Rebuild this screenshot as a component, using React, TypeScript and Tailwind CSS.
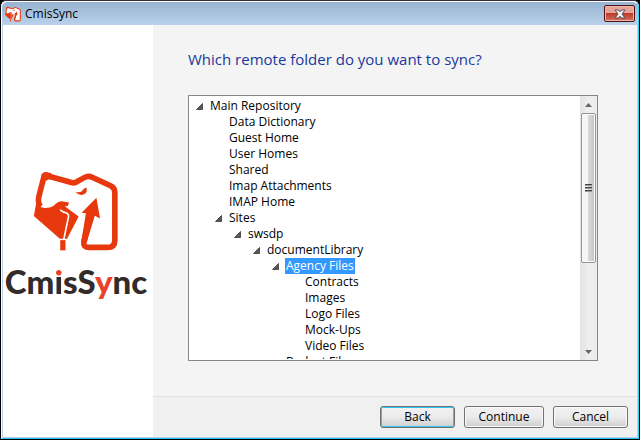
import { useState } from 'react';
import clsx from 'clsx';

type Folder = { name: string; children?: Folder[] };

const repository: Folder = {
  name: 'Main Repository',
  children: [
    { name: 'Data Dictionary' },
    { name: 'Guest Home' },
    { name: 'User Homes' },
    { name: 'Shared' },
    { name: 'Imap Attachments' },
    { name: 'IMAP Home' },
    {
      name: 'Sites',
      children: [
        {
          name: 'swsdp',
          children: [
            {
              name: 'documentLibrary',
              children: [
                {
                  name: 'Agency Files',
                  children: [
                    { name: 'Contracts' },
                    { name: 'Images' },
                    { name: 'Logo Files' },
                    { name: 'Mock-Ups' },
                    { name: 'Video Files' },
                  ],
                },
                { name: 'Budget Files' },
              ],
            },
          ],
        },
      ],
    },
  ],
};

function Elephant({ className }: { className: string }) {
  return (
    <svg viewBox="98 30 258 243" className={className} aria-hidden="true">
      <path
        d="M131 42 L114 108 Q110 128 120 138 L204 136 L235 168 L244 158 L250 243 Q246 262 265 262 H323 Q345 262 345 240 V95 Q345 81 332 75 L276 49 Q264 43 252 50 L232 61 Q223 68 213 65 Z"
        fill="#fff"
      />
      <path
        d="M131 42 L114 108 Q110 128 120 138 M131 42 L213 65 Q223 68 232 61 L252 50 Q264 43 276 49 L332 75 Q345 81 345 95 V240 Q345 262 323 262 H265 Q248 262 251 245 L262 200"
        fill="none"
        stroke="#e8380d"
        strokeWidth="17"
        strokeLinejoin="round"
      />
      <path d="M121 46 Q124 32 137 33 L152 37 L148 54 L122 66 Z" fill="#e8380d" />
      <path d="M289 111 L300 174 L284 166 L260 246 L243 244 L257 158 L244 157 Z" fill="#e8380d" />
      <path d="M225 94 Q240 97 246 90 Q249 82 259 80 Q262 94 253 100 Q238 108 225 94 Z" fill="#e8380d" />
      <path
        d="M106 128 Q118 144 140 142 Q155 141 164 131 Q172 122 183 122 L206 126 L202 136 L193 137 L235 168 L200 236 H178 L99 167 Z"
        fill="#e8380d"
      />
      <path d="M179 148 Q187 155 196 157 Q206 160 204 170 L190 237" fill="none" stroke="#fff" strokeWidth="5" />
      <path d="M179 240 H195 V271 H179 Z" fill="#e8380d" />
    </svg>
  );
}

function TreeItem({ folder, selected, onSelect }: { folder: Folder; selected: string; onSelect: (name: string) => void }) {
  const [open, setOpen] = useState(true);
  const active = selected === folder.name;

  return (
    <li role="treeitem" aria-selected={active} aria-expanded={folder.children ? open : undefined}>
      <div className="flex h-4 items-center">
        {folder.children ? (
          <button aria-label={`Toggle ${folder.name}`} onClick={() => setOpen(!open)} className="flex w-5 justify-center">
            <svg viewBox="0 0 7 7" className="size-[7px]">
              <path d="M6.5 0.5 V6.5 H0.5 Z" fill="#595959" stroke="#262626" strokeWidth="0.7" />
            </svg>
          </button>
        ) : (
          <span className="w-5" />
        )}
        <button
          onClick={() => onSelect(folder.name)}
          className={clsx('h-4 whitespace-nowrap px-px leading-4', active ? 'bg-[#3399ff] text-white' : 'text-black')}
        >
          {folder.name}
        </button>
      </div>
      {folder.children && open && (
        <ul role="group" className="pl-[19px]">
          {folder.children.map(c => (
            <TreeItem key={c.name} folder={c} selected={selected} onSelect={onSelect} />
          ))}
        </ul>
      )}
    </li>
  );
}

function ScrollBar() {
  return (
    <div className="flex w-[17px] shrink-0 flex-col bg-linear-to-r from-[#e3e3e3] via-[#eeeeee] to-[#ececec]" aria-hidden="true">
      <div className="flex h-[17px] items-center justify-center">
        <svg viewBox="0 0 7 4" className="h-1 w-[7px]">
          <path d="M3.5 0 L7 4 H0 Z" fill="#666" />
        </svg>
      </div>
      <div className="mx-px flex h-[57%] flex-col items-center justify-center gap-px rounded-xs border border-[#959595] bg-linear-to-r from-[#f5f5f5] from-45% via-[#d8d8d8] via-50% to-[#c4c4c8] shadow-[inset_0_0_0_1px_#fafafa]">
        {[0, 1, 2].map(i => (
          <span key={i} className="h-0.5 w-[7px] border-t border-[#444] bg-[#999]" />
        ))}
      </div>
      <div className="mt-auto flex h-[17px] items-center justify-center">
        <svg viewBox="0 0 7 4" className="h-1 w-[7px]">
          <path d="M0 0 H7 L3.5 4 Z" fill="#666" />
        </svg>
      </div>
    </div>
  );
}

const button =
  'h-[22px] rounded-[3px] border border-[#707070] bg-linear-to-b from-[#f2f2f2] from-0% via-[#ebebeb] via-50% to-[#cfcfcf] text-black';

export default function App() {
  const [selected, setSelected] = useState('Agency Files');

  return (
    <div className="h-screen bg-black font-['Open_Sans',sans-serif] text-[12px]">
      <div className="flex h-full flex-col rounded-t-md border border-black border-t-[#33303a] bg-[#b9d1ea]">
        <div className="flex min-h-0 flex-1 flex-col rounded-t-md border border-t-white border-r-[#35d3f5] border-b-[#1fc3e8] border-l-white">
          <header className="flex h-[23px] shrink-0 items-center gap-1 rounded-t-md bg-linear-to-b from-[#98b4d2] to-[#b9d1ea] px-[3px]">
            <Elephant className="size-4" />
            <h1 className="flex-1 text-black">CmisSync</h1>
            <button
              aria-label="Close"
              className="flex h-[17px] w-[31px] items-center justify-center rounded-xs border border-[#4b1119] bg-linear-to-b from-[#e5a497] from-45% via-[#bf3a26] via-50% to-[#d2705a] shadow-[inset_0_0_0_1px_#eeb5a8]"
            >
              <svg viewBox="0 0 12 10" className="h-[10px] w-3">
                <path
                  d="M1 1 H4.4 L6 2.8 L7.6 1 H11 L8 5 L11 9 H7.6 L6 7.2 L4.4 9 H1 L4 5 Z"
                  fill="#f4f4f4"
                  stroke="#50505c"
                  strokeWidth="1"
                  strokeLinejoin="round"
                />
              </svg>
            </button>
          </header>

          <div className="mx-px mb-px flex min-h-0 flex-1">
            <aside className="flex w-[150px] shrink-0 flex-col items-center bg-white pt-[146px] pr-1">
              <Elephant className="h-20 w-[86px]" />
              <p className="mt-2.5 font-['Lato',sans-serif] text-[33px] leading-10 font-black text-[#332b29]">
                Cm
                <span className="bg-linear-to-b from-[#e8432a] from-40% to-[#332b29] to-40% bg-clip-text text-transparent">i</span>
                sS<span className="text-[#e8432a]">y</span>nc
              </p>
            </aside>

            <div className="flex min-w-0 flex-1 flex-col bg-[#f4f4f4]">
              <main className="flex min-h-0 flex-1 flex-col px-[35px] pt-[22px] pb-[35px]">
                <h2 className="text-[15px] leading-6 text-[#19389b]">Which remote folder do you want to sync?</h2>
                <div className="mt-6 mr-1 flex min-h-0 flex-1 border border-[#828790] bg-white">
                  <div className="flex min-w-0 flex-1 py-px">
                    <ul
                      role="tree"
                      aria-label="Remote folders"
                      className="min-w-0 flex-1 overflow-y-auto pt-px [scrollbar-width:none]"
                    >
                      <TreeItem folder={repository} selected={selected} onSelect={setSelected} />
                    </ul>
                  </div>
                  <ScrollBar />
                </div>
              </main>

              <footer className="flex h-[41px] shrink-0 items-center justify-end gap-[9px] border-t border-[#dfdfdf] bg-[#f0f0f0] px-[9px]">
                <button className={clsx(button, 'w-[75px] shadow-[inset_0_0_0_1px_#2bc8f2]')}>Back</button>
                <button className={clsx(button, 'w-20 shadow-[inset_0_0_0_1px_#fafafa]')}>Continue</button>
                <button className={clsx(button, 'w-[75px] shadow-[inset_0_0_0_1px_#fafafa]')}>Cancel</button>
              </footer>
            </div>
          </div>
        </div>
      </div>
    </div>
  );
}
